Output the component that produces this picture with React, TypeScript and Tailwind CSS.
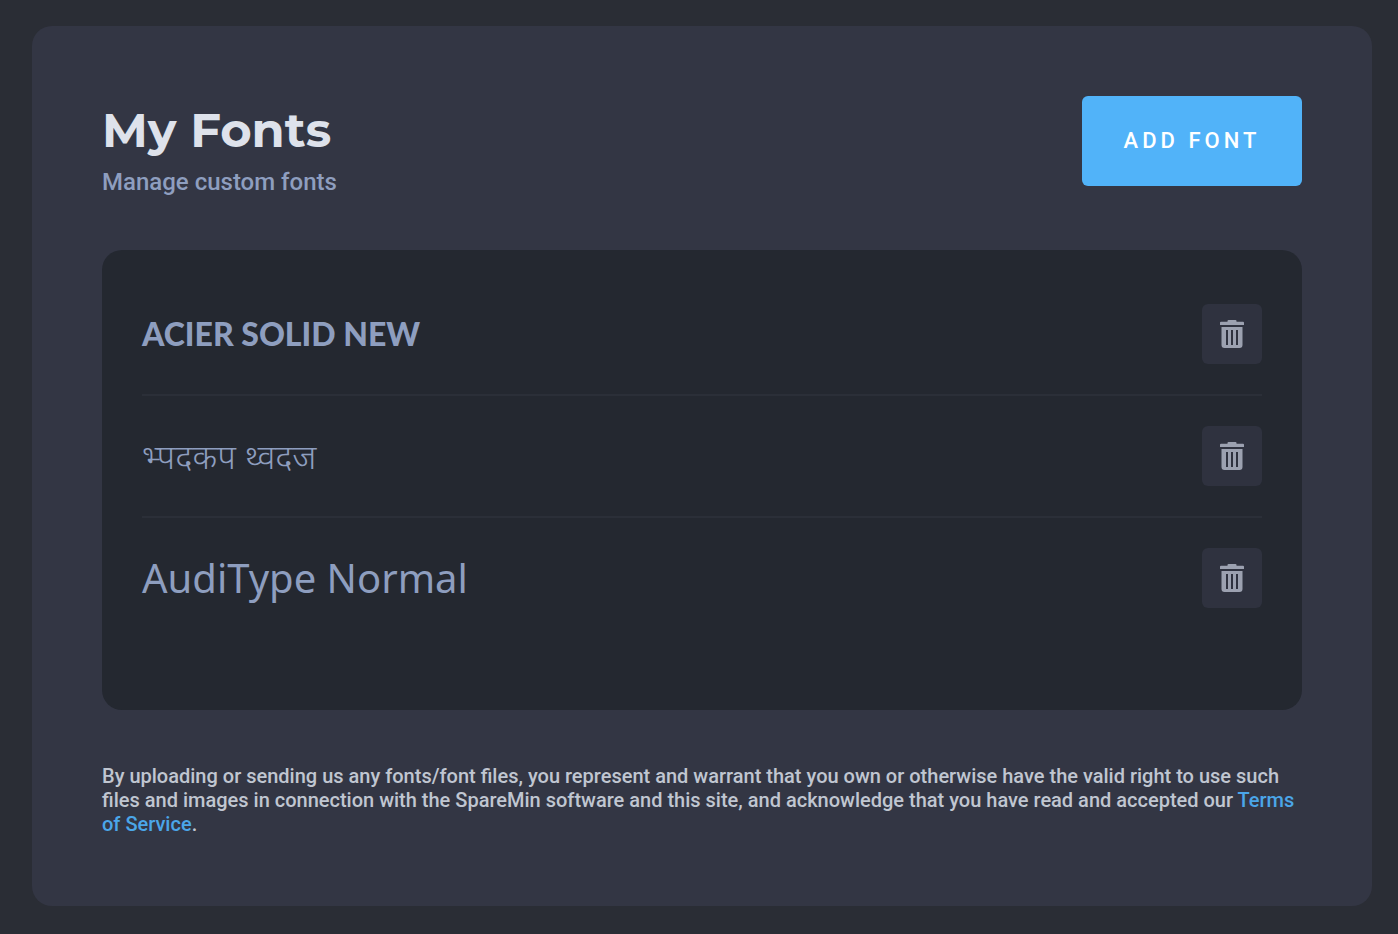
import React from "react";

type FontEntry = { name: string; className: string };

const fonts: FontEntry[] = [
  {
    name: "ACIER SOLID NEW",
    className: "font-['Lato','Liberation_Sans',sans-serif] text-[32px] font-black",
  },
  {
    name: "भ्पदकप थ्वदज",
    className: "font-['Noto_Sans','Noto_Sans_Devanagari',sans-serif] text-[34px] font-light",
  },
  {
    name: "AudiType Normal",
    className: "font-['Noto_Sans','Open_Sans',sans-serif] text-[40px]",
  },
];

function TrashIcon() {
  return (
    <svg width="24" height="28" viewBox="0 0 24 28" fill="currentColor" aria-hidden="true">
      <path d="M8.5 0h7a1 1 0 0 1 1 1v.7H23a1 1 0 0 1 1 1V5H0V2.700a1 1 0 0 1 1-1h6.500V1a1 1 0 0 1 1-1z" />
      <path
        fillRule="evenodd"
        d="M1.500 7h21v18a3 3 0 0 1-3 3h-15a3 3 0 0 1-3-3zM6 10v15h2V10zM11 10v15h2V10zM16 10v15h2V10z"
      />
    </svg>
  );
}

export default function App() {
  return (
    <div className="min-h-screen bg-[#2a2d35] px-8 pt-[26px] pr-[26px] pb-7 font-['Roboto','Liberation_Sans',sans-serif]">
      <main className="rounded-[20px] bg-[#333644] p-[70px]">
        <header className="flex items-start justify-between">
          <div className="pt-1.5">
            <h1 className="font-['Montserrat','Inter',sans-serif] text-[48px] leading-[56px] font-bold text-[#dee2eb]">
              My Fonts
            </h1>
            <p className="mt-2.5 text-2xl leading-7 font-medium text-[#8e9ebf]">
              Manage custom fonts
            </p>
          </div>
          <button
            type="button"
            className="h-[90px] w-[220px] rounded-md bg-[#51b3f9] pb-0.5 text-[22px] font-medium tracking-[4px] text-white"
          >
            ADD FONT
          </button>
        </header>
        <ul className="mt-[54px] min-h-[460px] rounded-[20px] bg-[#242830] px-10 pt-6">
          {fonts.map((font) => (
            <li
              key={font.name}
              className="flex h-[122px] items-center justify-between border-b-2 border-[#2b2f38] last:h-[120px] last:border-b-0"
            >
              <span className={`leading-[60px] text-[#8e9ebf] ${font.className}`}>{font.name}</span>
              <button
                type="button"
                aria-label={`Delete ${font.name}`}
                className="flex size-[60px] items-center justify-center rounded-md bg-[#2f323f] text-[#9ca1b0]"
              >
                <TrashIcon />
              </button>
            </li>
          ))}
        </ul>
        <p className="mt-[54px] text-xl leading-6 font-medium text-[#c0c6d1]">
          By uploading or sending us any fonts/font files, you represent and warrant that you own or
          otherwise have the valid right to use such files and images in connection with the SpareMin
          software and this site, and acknowledge that you have read and accepted our{" "}
          <a href="#terms" className="text-[#4ba6e9]">
            Terms of Service
          </a>
          .
        </p>
      </main>
    </div>
  );
}
